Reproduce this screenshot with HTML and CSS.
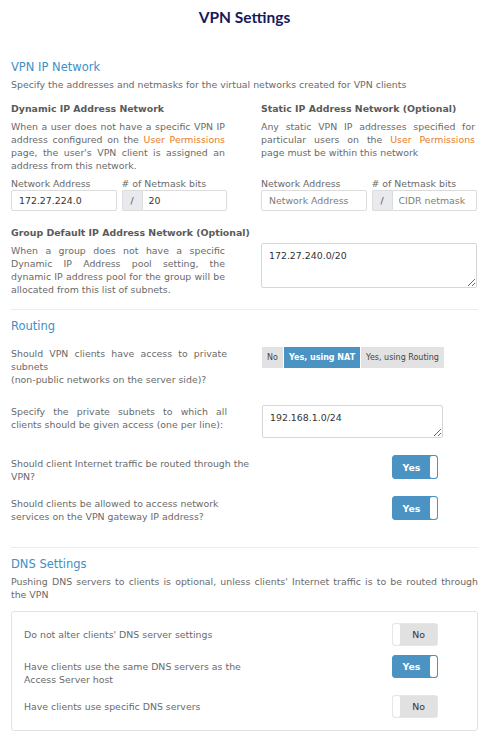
FILE: index.html
```html
<!DOCTYPE html>
<html lang="en">
<head>
<meta charset="utf-8">
<title>VPN Settings</title>
<link rel="stylesheet" href="styles.css">
</head>
<body>
<div class="page">
  <h1 class="title">VPN Settings</h1>

  <section class="section">
    <h2 class="section-title">VPN IP Network</h2>
    <p class="section-desc">Specify the addresses and netmasks for the virtual networks created for VPN clients</p>

    <div class="net-grid">
      <div class="cell">
        <h3 class="sub-title">Dynamic IP Address Network</h3>
        <p class="para">When a user does not have a specific VPN IP address configured on the <a class="link" href="#">User Permissions</a> page, the user's VPN client is assigned an address from this network.</p>
      </div>
      <div class="cell">
        <h3 class="sub-title">Static IP Address Network (Optional)</h3>
        <p class="para">Any static VPN IP addresses specified for particular users on the <a class="link" href="#">User Permissions</a> page must be within this network</p>
      </div>

      <div class="fields">
        <label class="field field-addr">
          <span class="field-label">Network Address</span>
          <input class="input" type="text" value="172.27.224.0">
        </label>
        <label class="field field-mask">
          <span class="field-label"># of Netmask bits</span>
          <span class="input-group">
            <span class="addon">/</span>
            <input class="input input-join" type="text" value="20">
          </span>
        </label>
      </div>
      <div class="fields">
        <label class="field field-addr">
          <span class="field-label">Network Address</span>
          <input class="input" type="text" placeholder="Network Address">
        </label>
        <label class="field field-mask">
          <span class="field-label"># of Netmask bits</span>
          <span class="input-group">
            <span class="addon">/</span>
            <input class="input input-join" type="text" placeholder="CIDR netmask">
          </span>
        </label>
      </div>

      <h3 class="sub-title span-all group-title">Group Default IP Address Network (Optional)</h3>
      <p class="para">When a group does not have a specific Dynamic IP Address pool setting, the dynamic IP address pool for the group will be allocated from this list of subnets.</p>
      <textarea class="textarea group-area">172.27.240.0/20</textarea>
    </div>
  </section>

  <hr class="divider">

  <section class="section">
    <h2 class="section-title">Routing</h2>

    <div class="row row-first">
      <p class="para question">Should VPN clients have access to private subnets<br>(non-public networks on the server side)?</p>
      <div class="segmented">
        <span class="seg">No</span>
        <span class="seg seg-on">Yes, using NAT</span>
        <span class="seg">Yes, using Routing</span>
      </div>
    </div>

    <div class="row row-subnets">
      <p class="para question">Specify the private subnets to which all clients should be given access (one per line):</p>
      <textarea class="textarea subnet-area">192.168.1.0/24</textarea>
    </div>

    <div class="row row-toggle row-traffic">
      <p class="question-wide">Should client Internet traffic be routed through the VPN?</p>
      <span class="toggle toggle-on"><span class="toggle-text">Yes</span><span class="knob"></span></span>
    </div>

    <div class="row row-toggle row-gateway">
      <p class="question-wide">Should clients be allowed to access network services on the VPN gateway IP address?</p>
      <span class="toggle toggle-on"><span class="toggle-text">Yes</span><span class="knob"></span></span>
    </div>
  </section>

  <hr class="divider divider-dns">

  <section class="section">
    <h2 class="section-title">DNS Settings</h2>
    <p class="section-desc justify">Pushing DNS servers to clients is optional, unless clients' Internet traffic is to be routed through the VPN</p>

    <div class="dns-box">
      <div class="dns-row">
        <p class="dns-label">Do not alter clients' DNS server settings</p>
        <span class="toggle toggle-off"><span class="knob"></span><span class="toggle-text">No</span></span>
      </div>
      <div class="dns-row">
        <p class="dns-label">Have clients use the same DNS servers as the Access Server host</p>
        <span class="toggle toggle-on"><span class="toggle-text">Yes</span><span class="knob"></span></span>
      </div>
      <div class="dns-row">
        <p class="dns-label">Have clients use specific DNS servers</p>
        <span class="toggle toggle-off"><span class="knob"></span><span class="toggle-text">No</span></span>
      </div>
    </div>
  </section>
</div>
</body>
</html>
```

FILE: styles.css
```css
* {
  box-sizing: border-box;
}

body {
  margin: 0;
  background: #ffffff;
  font-family: "DejaVu Sans", Verdana, sans-serif;
  font-size: 9.4px;
  line-height: 13px;
  color: #6a6a6a;
}

.page {
  width: 495px;
  padding: 7px 17px 0 11px;
}

p,
h1,
h2,
h3 {
  margin: 0;
}

.title {
  font-family: Lato, "DejaVu Sans", sans-serif;
  font-weight: 700;
  font-size: 15.5px;
  line-height: 20px;
  text-align: center;
  color: #16195c;
}

/* section headings */
.section-title {
  font-size: 11.5px;
  line-height: 15px;
  font-weight: 400;
  color: #3e8fc6;
}

.section:first-of-type .section-title {
  margin-top: 33px;
}

.section-desc {
  margin-top: 3px;
}

.justify {
  text-align: justify;
}

/* VPN IP network grid */
.net-grid {
  display: grid;
  grid-template-columns: 216px 216px;
  column-gap: 34px;
  align-items: start;
  margin-top: 11px;
}

.sub-title {
  font-size: 9.4px;
  line-height: 13px;
  font-weight: 700;
  color: #5a5a5a;
}

.span-all {
  grid-column: 1 / -1;
  white-space: nowrap;
}

.para {
  margin-top: 5px;
  text-align: justify;
}

.net-grid .para {
  margin-right: 2px;
}

.link {
  color: #e57d2c;
  text-decoration: none;
}

.fields {
  display: flex;
  gap: 5px;
  margin-top: 6px;
}

.field {
  display: flex;
  flex-direction: column;
}

.field-addr {
  width: 106px;
}

.field-mask {
  width: 106px;
}

.field-label {
  line-height: 12px;
  color: #6a6a6a;
}

.input {
  height: 21px;
  width: 100%;
  border: 1px solid #dcdcdc;
  border-radius: 2px;
  padding: 0 7px;
  font-family: "DejaVu Sans", Verdana, sans-serif;
  font-size: 9.4px;
  color: #333333;
  background: #ffffff;
  outline: none;
}

.input::placeholder {
  color: #7d7d7d;
}

.input-group {
  display: flex;
}

.addon {
  width: 20px;
  height: 21px;
  flex: none;
  display: flex;
  align-items: center;
  justify-content: center;
  background: #e8eaee;
  border: 1px solid #dcdcdc;
  border-right: none;
  border-radius: 2px 0 0 2px;
  color: #555555;
}

.input-join {
  border-radius: 0 2px 2px 0;
  padding-left: 6px;
}

.group-title {
  margin-top: 15px;
}

.textarea {
  display: block;
  border: 1px solid #d6d6d6;
  border-radius: 2px;
  padding: 5px 7px;
  font-family: "DejaVu Sans", Verdana, sans-serif;
  font-size: 9.4px;
  line-height: 13px;
  color: #333333;
  background: #ffffff;
  outline: none;
}

.group-area {
  width: 216px;
  height: 45px;
  margin-top: 4px;
}

.divider {
  border: none;
  border-top: 1px solid #ececec;
  margin: 13px 0 0;
}

.divider-dns {
  margin-top: 24px;
}

.divider + .section .section-title {
  margin-top: 9px;
}

/* routing rows */
.row {
  display: grid;
  grid-template-columns: 216px 1fr;
  column-gap: 35px;
  align-items: start;
}

.row-first {
  margin-top: 13px;
}

.row .para.question {
  margin-top: 0;
}

.row-subnets {
  margin-top: 19px;
}

.subnet-area {
  width: 181px;
  height: 33px;
  padding-top: 5px;
}

.segmented {
  display: flex;
  height: 21px;
  width: max-content;
  font-size: 8px;
}

.seg {
  display: flex;
  align-items: center;
  padding: 0 5px;
  background: #e2e2e2;
  color: #444444;
}

.seg-on {
  background: #4a93c2;
  color: #ffffff;
  font-weight: 700;
  margin: 0 1px;
}

.row-toggle {
  grid-template-columns: 1fr 46px;
  column-gap: 0;
  padding-right: 40px;
}

.row-traffic {
  margin-top: 17px;
}

.row-gateway {
  margin-top: 13px;
}

.question-wide {
  width: 240px;
  padding-top: 2px;
}

.row-gateway .question-wide {
  padding-top: 1px;
}

/* switches */
.toggle {
  display: flex;
  width: 46px;
  height: 24px;
  border-radius: 3px;
  overflow: hidden;
  font-size: 9.4px;
  font-weight: 700;
}

.toggle-text {
  flex: 1;
  display: flex;
  align-items: center;
  justify-content: center;
}

.knob {
  width: 7px;
  background: #ffffff;
  border-radius: 2px;
}

.toggle-on {
  background: #4a93c2;
  border: 1px solid #4a93c2;
  color: #ffffff;
}

.toggle-on .knob {
  margin-left: auto;
}

.toggle-off {
  background: #e1e1e1;
  border: 1px solid #e6e6e6;
  color: #333333;
  font-weight: 400;
}

/* DNS options */
.dns-box {
  margin-top: 10px;
  border: 1px solid #e2e2e2;
  border-radius: 3px;
  padding: 11px 39px 12px 12px;
  display: flex;
  flex-direction: column;
  gap: 9px;
  width: 467px;
}

.dns-row {
  display: flex;
  justify-content: space-between;
  align-items: flex-start;
}

.dns-row .toggle {
  height: 23px;
}

.dns-label {
  width: 240px;
  padding-top: 5px;
}
```
